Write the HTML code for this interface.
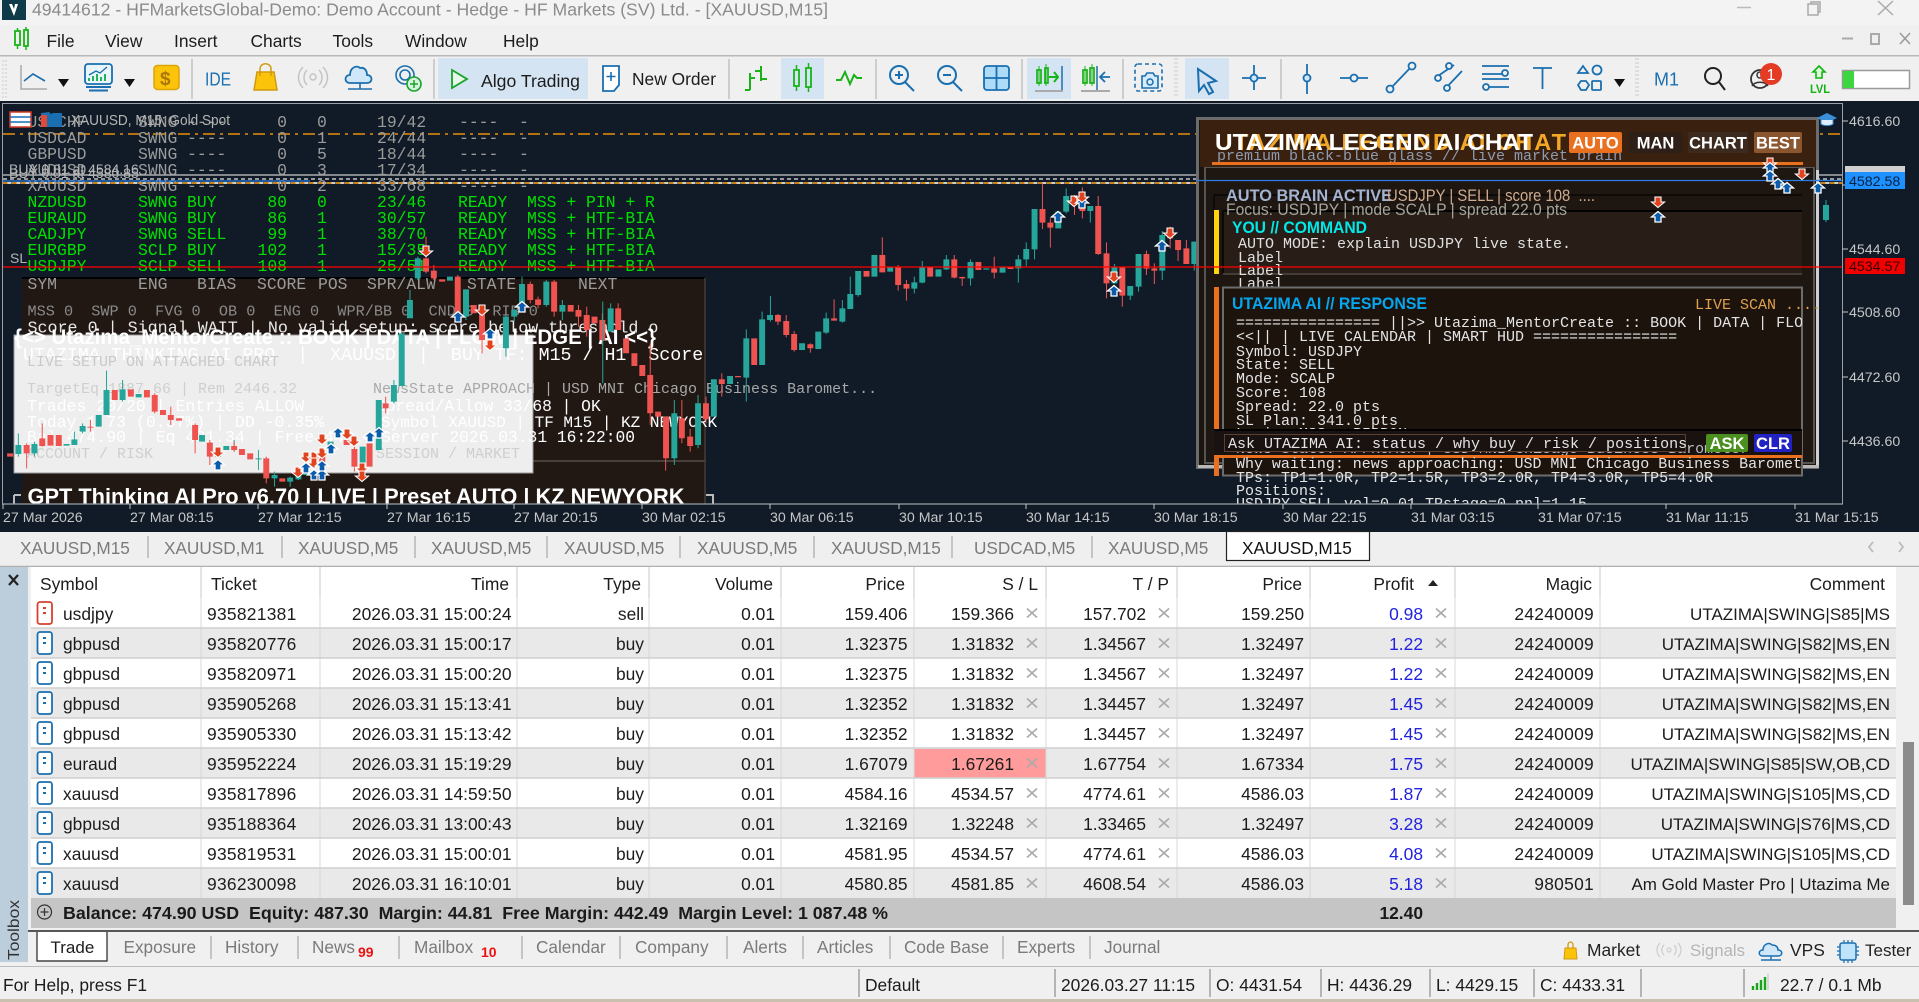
<!DOCTYPE html>
<html lang="en"><head><meta charset="utf-8"><title>XAUUSD,M15</title>
<style>
html,body{margin:0;padding:0;background:#f0f0f0;width:1919px;height:1002px;overflow:hidden}
svg{display:block}
text{font-family:"Liberation Sans",sans-serif;font-size:17.4px;fill:#1c1c1c;white-space:pre}
.m text,text.m{font-family:"Liberation Mono",monospace;font-size:15px}
.e{text-anchor:end}
.t text{font-size:17.2px;fill:#7a7a7a}
.b text{font-size:17.2px;fill:#7a7a7a}
.ax text{font-size:14.2px;fill:#c6c6c6}
.g16 text{font-family:"Liberation Mono",monospace;font-size:16.4px;fill:#9b9b9b}
.gr text{fill:#00e000}
.st text{font-size:17.4px;fill:#1c1c1c}
.ic{fill:none;stroke:#1a6fb0;stroke-width:2}
.gi{fill:none;stroke:#17b317;stroke-width:2}
.r text:nth-of-type(2),.r text:nth-of-type(11){letter-spacing:.28px}
.r text:nth-of-type(12){font-size:17px}
</style></head><body>
<svg xmlns="http://www.w3.org/2000/svg" width="1919" height="1002" viewBox="0 0 1919 1002">
<defs>
<clipPath id="ch"><rect x="3" y="104" width="1839" height="400"/></clipPath>
<clipPath id="box"><rect x="1222" y="287" width="580" height="188"/></clipPath>
<clipPath id="pn"><rect x="1200" y="100" width="620" height="404"/></clipPath>
<path id="x" d="M-5-4.500L5 4.500M-5 4.500L5-4.500" stroke="#aaa" stroke-width="1.600" fill="none"/>
<path id="u" d="M0-5.500L6.500 0H3V5H-3V0H-6.500Z" fill="#0b5cab" stroke="#fff" stroke-width="1.300"/>
<path id="d" d="M0 5.500L6.500 0H3V-5H-3V0H-6.500Z" fill="#e0431f" stroke="#fff" stroke-width="1.100"/>
<g id="buy"><rect x="37.500" y="-18" width="14.500" height="22" rx="2.500" fill="#fff" stroke="#1a6fb0" stroke-width="1.800"/><path d="M43 -12h3M43 -7h3" stroke="#1a6fb0" stroke-width="2"/></g>
</defs>

<!-- title bar -->
<rect width="1919" height="25" fill="#f3f3f3"/>
<rect x="2" y="0" width="24" height="20" fill="#0e3a4a"/>
<path d="M9 4l5 12 4-12h-3l-1 5-2-5z" fill="#fff"/>
<text x="32" y="15.500" textLength="796" lengthAdjust="spacingAndGlyphs" style="fill:#8b8b8b;font-size:17.500px">49414612 - HFMarketsGlobal-Demo: Demo Account - Hedge - HF Markets (SV) Ltd. - [XAUUSD,M15]</text>
<path d="M1737 7.500h14" stroke="#bbb" stroke-width="1.500"/>
<path d="M1808 4h10v11h-10zM1811 4v-2h9v10h-2" stroke="#aaa" stroke-width="1.500" fill="none"/>
<path d="M1878 1l15 14M1893 1l-15 14" stroke="#aaa" stroke-width="1.500"/>

<!-- menu -->
<rect y="25" width="1919" height="30" fill="#f0f0f0"/>
<rect y="55" width="1919" height="1.500" fill="#b8b8b8"/>
<path class="gi" d="M15 31v14h5v-14zM24 30v16h4v-16z" style="stroke-width:1.800"/><path d="M17.500 28v3M17.500 45v4M26 27v3M26 46v4" stroke="#17b317" stroke-width="1.500"/>
<g>
<text x="46.500" y="47">File</text><text x="105" y="47">View</text><text x="174" y="47">Insert</text><text x="250.500" y="47">Charts</text><text x="332.500" y="47">Tools</text><text x="405" y="47">Window</text><text x="503" y="47">Help</text>
</g>
<path d="M1842 38.500h11" stroke="#aaa" stroke-width="2"/><rect x="1871" y="34" width="8" height="10" fill="none" stroke="#aaa" stroke-width="2"/>
<path d="M1900 33l10 11M1910 33l-10 11" stroke="#999" stroke-width="1.500"/>

<!-- toolbar -->
<rect y="57" width="1919" height="44" fill="#f0f0f0"/>
<rect x="438" y="58" width="150" height="41" fill="#d5e4f2"/>
<rect x="781" y="58" width="43" height="41" fill="#d5e4f2"/>
<rect x="1027" y="58" width="44" height="41" fill="#d5e4f2"/>
<rect x="1185" y="58" width="44" height="41" fill="#d5e4f2"/>
<path d="M192 59v40M434 59v40M729 59v40M876 59v40M1022 59v40M1123 59v40M1281 59v40" stroke="#aaa" stroke-width="1"/>
<path d="M3 60v38M6 60v38M1177 58v40M1175 58v40M1638 58v40M1636 58v40" stroke="#ccc" stroke-width="1" stroke-dasharray="2 2"/>
<path d="M21 65V89H47" stroke="#a9a9a9" stroke-width="1.500" fill="none"/><path class="ic" d="M24 81l9-7 12 7" style="stroke-width:1.600"/>
<path d="M58 79h11l-5.500 8z" fill="#111"/>
<rect x="85" y="64" width="27" height="20" rx="3" fill="#eaf4fb" stroke="#1a6fb0" stroke-width="1.800"/><path d="M89 81v-3M93 81v-5M97 81v-7M101 81v-4M105 81v-7" stroke="#21b35a" stroke-width="2"/><path d="M89 75l7-4 4 2 7-6" stroke="#1a6fb0" stroke-width="1.300" fill="none"/><path d="M86 87h25M89 90.500h19" stroke="#1a6fb0" stroke-width="2"/>
<path d="M124 79h11l-5.500 8z" fill="#111"/>
<rect x="154" y="65.500" width="25" height="24" rx="3.500" fill="#fbc40a" stroke="#dca30a" stroke-width="1.500"/>
<text x="160" y="85" style="font-size:19px;font-weight:bold;fill:#a9770a">$</text>
<text x="205" y="85.500" textLength="26" lengthAdjust="spacingAndGlyphs" style="font-size:18px;fill:#1a6fb0">IDE</text>
<path d="M257 72h17l3 18h-23z" fill="#fbc40a" stroke="#d09a10" stroke-width="1.500"/><path d="M260 76v-7c0-7 11-7 11 0v7" fill="none" stroke="#d09a10" stroke-width="1.500"/>
<g fill="none" stroke="#c4c4c4" stroke-width="1.500"><circle cx="313" cy="77" r="3"/><path d="M307 70c-4 4-4 11 0 15M319 70c4 4 4 11 0 15M303 67c-6 6-6 15 0 21M323 67c6 6 6 15 0 21"/></g>
<path d="M350 83c-6 0-6-8 0-8 0-8 7-10 10-7 5-1 7 3 7 7 6 0 6 8 0 8z" fill="#cfe7f8" stroke="#1a6fb0" stroke-width="1.800"/><path d="M360 83v6M348 89h24" stroke="#1a6fb0" stroke-width="1.600"/>
<g fill="none" stroke="#1a6fb0" stroke-width="1.600"><circle cx="405" cy="75" r="9"/><circle cx="405" cy="75" r="5"/></g><circle cx="414" cy="84" r="7" fill="#d8f3dc" stroke="#17a32b" stroke-width="1.600"/><path d="M414 80v8M410 84h8" stroke="#17a32b" stroke-width="1.500"/>
<path d="M452 70l15 9-15 9z" fill="#e8f7e8" stroke="#17a32b" stroke-width="1.800"/>
<text x="481" y="87" textLength="99" lengthAdjust="spacingAndGlyphs">Algo Trading</text>
<path d="M603 66h16v19l-5 6h-11z" fill="#fff" stroke="#1a6fb0" stroke-width="1.800"/><path d="M611 72v9M606.500 76.500h9" stroke="#1a6fb0" stroke-width="1.600"/>
<text x="632" y="85" textLength="84" lengthAdjust="spacingAndGlyphs">New Order</text>
<path class="gi" d="M750 73v17M745 90h5M750 78h5M761 66v15M755 71h6M761 79h6"/>
<path class="gi" d="M794 70v16h5v-16zM806 68v19h5v-19z" style="stroke-width:1.800"/><path d="M796.500 65v5M796.500 86v5M808.500 63v5M808.500 87v5" stroke="#17b317" stroke-width="1.500"/>
<path class="gi" d="M836 80h5l4-8 5 12 4-9 3 3h5"/>
<g class="ic"><circle cx="899" cy="75" r="9"/><path d="M905 82l9 9M895 75h8M899 71v8"/><circle cx="947" cy="75" r="9"/><path d="M953 82l9 9M943 75h8"/></g>
<rect x="984" y="66" width="25" height="24" rx="3" fill="#aedcf8" stroke="#1a6fb0" stroke-width="1.800"/><path d="M984 78h25M996.500 66v24" stroke="#1a6fb0" stroke-width="1.800"/>
<path class="gi" d="M1037 70v13h4v-13zM1045 68v15h-1 4v-15z" style="stroke-width:1.700"/><path d="M1039 66v20M1046 64v22" stroke="#17b317" stroke-width="1"/><path class="gi" d="M1049 77h8M1054 72l4 5-4 5"/><path d="M1062 66v24" stroke="#1a6fb0" stroke-width="1.500"/><path d="M1035 91h28" stroke="#aaa" stroke-width="2"/>
<path class="gi" d="M1083 70v13h4v-13zM1090 68v15h4v-15z" style="stroke-width:1.700"/><path d="M1085 66v20M1092 64v22" stroke="#17b317" stroke-width="1"/><path d="M1097 66v24" stroke="#1a6fb0" stroke-width="1.500"/><path d="M1110 77h-9M1105 72l-5 5 5 5" fill="none" stroke="#1a6fb0" stroke-width="1.800"/><path d="M1081 91h29" stroke="#aaa" stroke-width="2"/>
<rect x="1135" y="64" width="27" height="27" rx="3" fill="none" stroke="#1a6fb0" stroke-width="1.600" stroke-dasharray="4 3"/><path d="M1142 76h3l2-3h6l2 3h3v12h-16z" fill="#d6ecfa" stroke="#1a6fb0" stroke-width="1.600"/><circle cx="1150" cy="82" r="3" fill="none" stroke="#1a6fb0" stroke-width="1.500"/>
<path d="M1198 69l18 12-8 2 5 9-4 2-5-9-5 6z" fill="#d5e4f2" stroke="#1a6fb0" stroke-width="2"/>
<g class="ic" style="stroke-width:1.800"><path d="M1254 65v25M1242 78h24"/><circle cx="1254" cy="78" r="3.500" fill="#cfe7f8"/>
<path d="M1307 64v30"/><circle cx="1307" cy="78" r="3.500" fill="#cfe7f8"/>
<path d="M1340 78h28"/><circle cx="1354" cy="78" r="3.500" fill="#f0f0f0"/>
<path d="M1390 89l22-23"/><circle cx="1390" cy="89" r="3.500" fill="#f0f0f0"/><circle cx="1412" cy="66" r="3.500" fill="#f0f0f0"/>
<path d="M1438 76l16-11M1445 89l17-18"/><circle cx="1438" cy="78" r="3" fill="#f0f0f0"/><circle cx="1449" cy="66" r="3" fill="#f0f0f0"/><circle cx="1447" cy="88" r="3" fill="#f0f0f0"/>
<path d="M1482 66h27M1482 74h22M1487 87h22M1482 79h27"/><circle cx="1505" cy="73" r="3" fill="#f0f0f0"/><circle cx="1486" cy="87" r="3" fill="#f0f0f0"/>
<path d="M1533 68h19M1542.500 68v21"/>
<path d="M1578 73l5-7 5 7z"/><circle cx="1597" cy="70" r="4.500"/><path d="M1578 85l3-4h5l3 4-3 5h-5z"/><rect x="1592" y="81" width="9" height="9" rx="1"/></g>
<path d="M1614 79h11l-5.500 8z" fill="#111"/>
<text x="1654" y="85.500" style="fill:#1a6fb0;font-size:18px">M1</text>
<circle cx="1713" cy="76" r="8" fill="none" stroke="#222" stroke-width="2"/><path d="M1719 82l6 8" stroke="#222" stroke-width="2"/>
<circle cx="1760" cy="79" r="9" fill="none" stroke="#333" stroke-width="1.800"/><path d="M1752 86c3-5 13-5 16 0M1757 75c0-4 6-4 6 0s-6 4-6 0" stroke="#333" stroke-width="1.500" fill="none"/>
<circle cx="1771" cy="74" r="11" fill="#e43b25"/><text x="1771" y="80" style="text-anchor:middle;fill:#fff;font-size:16px">1</text>
<path d="M1819 66l6 6h-3v6h-6v-6h-3z" fill="#dff7df" stroke="#11b511" stroke-width="1.600"/><text x="1810" y="93" textLength="20" lengthAdjust="spacingAndGlyphs" style="fill:#11b511;font-size:12px;font-weight:bold">LVL</text>
<rect x="1842.500" y="70.500" width="67" height="18" fill="#fff" stroke="#9a9a9a" stroke-width="1.500"/><rect x="1843" y="71" width="11" height="17" fill="#3ed63e"/>

<!-- chart -->
<rect y="101" width="1919" height="431" fill="#111b27"/>
<path d="M2.500 504V103.500H1842.500V504H2.500" fill="none" stroke="#9aa0a6" stroke-width="1"/>
<g clip-path="url(#ch)">
<rect x="22" y="278" width="683" height="226" fill="#211814"/>
<path d="M22 278h683" stroke="#000" stroke-width="2"/><path d="M705 278v226" stroke="#3a332e" stroke-width="2"/>
<path d="M533 461h172" stroke="#4a403a" stroke-width="2"/>
<rect x="14" y="335" width="519" height="138" fill="#eeeeee" stroke="#999" stroke-width="1"/>
<path d="M14 495v9M14 495h7M706 495h7v9" fill="none" stroke="#bbb" stroke-width="2"/>

<path d="M3 134H1842" stroke="#e8900c" stroke-width="1.500" stroke-dasharray="12 5 3 5"/>
<path d="M3 175H1842" stroke="#c9c9c9" stroke-width="1.200"/>
<path d="M3 179H1842" stroke="#e6e6e6" stroke-width="1.200" stroke-dasharray="4 3"/>
<path d="M3 183H1842" stroke="#e8900c" stroke-width="1.700" stroke-dasharray="5 4"/>
<path d="M7.500 183H1842" stroke="#e8e8e8" stroke-width="1.700" stroke-dasharray="4 5"/>

<g class="g16">
<text x="27.500" y="127">USDCHF</text><text x="138" y="127">SWNG</text><text x="187" y="127">----</text><text x="287" y="127" class="e">0</text><text x="317" y="127">0</text><text x="377" y="127">19/42</text><text x="459" y="127">----</text><text x="519" y="127">-</text>
<text x="27.500" y="143">USDCAD</text><text x="138" y="143">SWNG</text><text x="187" y="143">----</text><text x="287" y="143" class="e">0</text><text x="317" y="143">1</text><text x="377" y="143">24/44</text><text x="459" y="143">----</text><text x="519" y="143">-</text>
<text x="27.500" y="159">GBPUSD</text><text x="138" y="159">SWNG</text><text x="187" y="159">----</text><text x="287" y="159" class="e">0</text><text x="317" y="159">5</text><text x="377" y="159">18/44</text><text x="459" y="159">----</text><text x="519" y="159">-</text>
<text x="27.500" y="175">AUDUSD</text><text x="138" y="175">SWNG</text><text x="187" y="175">----</text><text x="287" y="175" class="e">0</text><text x="317" y="175">3</text><text x="377" y="175">17/34</text><text x="459" y="175">----</text><text x="519" y="175">-</text>
<text x="27.500" y="191">XAUUSD</text><text x="138" y="191">SWNG</text><text x="187" y="191">----</text><text x="287" y="191" class="e">0</text><text x="317" y="191">2</text><text x="377" y="191">33/68</text><text x="459" y="191">----</text><text x="519" y="191">-</text>
<g class="gr">
<text x="27.500" y="207">NZDUSD</text><text x="138" y="207">SWNG</text><text x="187" y="207">BUY</text><text x="287" y="207" class="e">80</text><text x="317" y="207">0</text><text x="377" y="207">23/46</text><text x="458" y="207">READY</text><text x="527" y="207">MSS + PIN + R</text>
<text x="27.500" y="223">EURAUD</text><text x="138" y="223">SWNG</text><text x="187" y="223">BUY</text><text x="287" y="223" class="e">86</text><text x="317" y="223">1</text><text x="377" y="223">30/57</text><text x="458" y="223">READY</text><text x="527" y="223">MSS + HTF-BIA</text>
<text x="27.500" y="239">CADJPY</text><text x="138" y="239">SWNG</text><text x="187" y="239">SELL</text><text x="287" y="239" class="e">99</text><text x="317" y="239">1</text><text x="377" y="239">38/70</text><text x="458" y="239">READY</text><text x="527" y="239">MSS + HTF-BIA</text>
<text x="27.500" y="255">EURGBP</text><text x="138" y="255">SCLP</text><text x="187" y="255">BUY</text><text x="287" y="255" class="e">102</text><text x="317" y="255">1</text><text x="377" y="255">15/35</text><text x="458" y="255">READY</text><text x="527" y="255">MSS + HTF-BIA</text>
<text x="27.500" y="271">USDJPY</text><text x="138" y="271">SCLP</text><text x="187" y="271">SELL</text><text x="287" y="271" class="e">108</text><text x="317" y="271">1</text><text x="377" y="271">25/51</text><text x="458" y="271">READY</text><text x="527" y="271">MSS + HTF-BIA</text>
</g>
<text x="27.500" y="289">SYM</text><text x="138" y="289">ENG</text><text x="197" y="289">BIAS</text><text x="257" y="289">SCORE</text><text x="318" y="289">POS</text><text x="367" y="289">SPR/ALW</text><text x="467" y="289">STATE</text><text x="578" y="289">NEXT</text>
</g>

<text x="71" y="125" textLength="159" lengthAdjust="spacingAndGlyphs" style="fill:#b5b5b5;font-size:15px">XAUUSD, M15: Gold Spot</text>
<rect x="10" y="112" width="21" height="15" fill="#fff" stroke="#d63a2a" stroke-width="1.500"/><path d="M10 117h21M10 122h21" stroke="#1a6fb0" stroke-width="1.500"/>
<path d="M41 113l8-1 2 2 2-1h9v14H41z" fill="#1a6fb0"/><rect x="41" y="115" width="6" height="12" fill="#e14a3a"/>
<text x="9" y="174" style="fill:#b5b5b5;font-size:14px">BUY 0.01 at 4584.16</text>
<text x="9" y="178" style="fill:#b5b5b5;font-size:14px">BUY 0.01 at 4580.85</text>
<text x="10" y="263" style="fill:#b5b5b5;font-size:14px">SL</text>

<g class="m">
<text x="27.500" y="315.500" style="fill:#8a8a8a;font-size:15.200px">MSS 0  SWP 0  FVG 0  OB 0  ENG 0  WPR/BB 0  CND 0  RIB 0</text>
<text x="27.500" y="332.500" style="fill:#e8e8e8;font-size:16.700px">Score 0 | Signal WAIT | No valid setup: score below threshold o</text>
<text x="23" y="360" style="fill:#fff;font-size:18.300px">UTAZIMA THINKING AI PRO  |  XAUUSD  |  BUY TF: M15 / H1  Score</text>
<text x="27" y="366" style="fill:#c9c9c9">LIVE SETUP ON ATTACHED CHART</text>
<text x="27" y="393" style="fill:#cfcfcf">TargetEq 1887.66 | Rem 2446.32</text>
<text x="373" y="393" style="fill:#a8a8a8">NewsState APPROACH | USD MNI Chicago Business Baromet...</text>
<text x="27" y="411" style="fill:#fff;font-size:16.500px">Trades 20/20 | Entries ALLOW</text>
<text x="376" y="411" style="fill:#fff;font-size:16.300px">Spread/Allow 33/68 | OK</text>
<text x="27" y="427" style="fill:#fff;font-size:16.500px">Today 1.73 (0.37%) | DD -0.35%</text>
<text x="381" y="427" style="fill:#fff;font-size:16px">Symbol XAUUSD | TF M15 | KZ NEWYORK</text>
<text x="27" y="442" style="fill:#fff;font-size:16.500px">Bal 474.90 | Eq 481.34 | Free 442.49</text>
<text x="381" y="442" style="fill:#fff;font-size:16.300px">Server 2026.03.31 16:22:00</text>
<text x="27" y="458" style="fill:#cfcfcf">ACCOUNT / RISK</text>
<text x="376" y="458" style="fill:#cfcfcf">SESSION / MARKET</text>
</g>
<text x="14" y="344" textLength="642" lengthAdjust="spacingAndGlyphs" style="fill:#fff;font-weight:bold;font-size:21px">{&lt;&gt; Utazima_MentorCreate :: BOOK | DATA | FLOW | EDGE | AI &lt;&lt;}</text>
<text x="27.500" y="504" textLength="657" lengthAdjust="spacingAndGlyphs" style="fill:#fff;font-weight:bold;font-size:22px">GPT Thinking AI Pro v6.70 | LIVE | Preset AUTO | KZ NEWYORK</text>

<!-- candles: left section -->
<g transform="translate(0,300) scale(.4591,.3333)">
<path fill="none" stroke="#26a69a" stroke-width="2.200" d="M40 400V470M232 212V345M267 240V305M598 515V560M632 530V560M858 240V310M75 425V470M162 395V435M180 370V400M510 420V455M563 450V510M650 520V540"/>
<path fill="none" stroke="#ef5350" stroke-width="2.200" d="M58 430V505M92 370V440M197 360V395M425 370V460M337 280V340M457 420V495M580 470V550M772 440V515M840 290V340M372 320V375M510 425V455"/>
<path fill="none" stroke="#26a69a" stroke-width="13" d="M40 435V462M75 432V460M145 432V437M162 418V435M180 378V395M215 345V380M232 270V345M267 268V300M302 282V292M440 405V425M475 450V470M493 438V450M563 475V478M598 525V535M632 533V545M650 525V538M667 505V525M720 425V445M790 440V490M825 300V450M858 255V305M875 100V258"/>
<path fill="none" stroke="#ef5350" stroke-width="13" d="M22 460V470M58 435V460M92 415V438M110 405V437M128 405V438M197 380V383M250 270V300M285 268V290M320 270V292M337 285V335M355 330V345M372 345V360M390 355V362M425 375V420M457 428V470M510 438V450M527 447V465M545 460V478M580 475V535M615 535V545M685 475V500M702 445V490M755 420V435M772 447V500M805 430V500M840 310V325"/>
</g>
<g transform="translate(0,100) scale(.4591,.3333)">
<path fill="none" stroke="#26a69a" stroke-width="2.200" d="M910 470V540M1137 530V620M1015 568V660M893 570V650M1190 540V620M1225 600V660M1120 625V665M1102 645V770"/>
<path fill="none" stroke="#ef5350" stroke-width="2.200" d="M928 410V520M945 495V540M1155 545V610M1207 540V650M997 525V650M1172 590V625M1050 625V760M1260 615V680M1278 620V710M1312 640V735"/>
<path fill="none" stroke="#26a69a" stroke-width="13" d="M910 475V535M980 530V542M1015 568V650M1102 650V745M1120 630V650M1137 552V610M1190 545V615M1225 615V635M893 600V655"/>
<path fill="none" stroke="#ef5350" stroke-width="13" d="M928 475V515M945 512V535M963 538V545M997 530V640M1032 615V640M1050 640V720M1068 700V740M1155 552V600M1172 598V615M1207 545V635M1243 615V635M1260 630V650M1278 645V690M1295 650V670M1312 660V720"/>
</g>
<g transform="translate(600,130) scale(.3954,.3333)">
<path fill="none" stroke="#26a69a" stroke-width="2.500" d="M7 515V760M27 520V605M431 498V575M410 545V570M370 598V815M1179 175V250M1240 228V278M633 440V495M653 423V500M613 510V578M572 548V612M1058 375V458M1078 337V408M1099 237V388M937 388V467M815 393V460M795 440V490M876 375V420M1422 303V450M1341 468V510M1362 372V485M1503 335V422M1301 402V460M1159 245V295M188 810V1005M248 795V955"/>
<path fill="none" stroke="#ef5350" stroke-width="2.500" d="M1119 160V297M1139 265V353M714 322V427M754 405V482M775 450V512M896 375V445M916 440V468M997 380V445M1200 195V255M1220 172V265M1260 198V375M1281 337V505M1321 410V530M1382 362V435M1402 400V462M1442 290V355M1462 330V393M1483 330V402M592 508V572M450 552V585M471 555V622M491 603V665M532 640V668M166 860V1022M207 810V940M228 897V965M127 640V885M268 800V880M308 730V800M46 520V600"/>
<path fill="none" stroke="#26a69a" stroke-width="15" d="M27 535V605M188 850V985M248 820V945M288 748V860M329 738V762M370 625V743M410 568V705M430 555V570M511 640V660M552 605V657M572 565V608M613 535V575M633 492V537M653 423V495M694 375V440M734 410V425M795 457V476M815 410V458M856 418V440M876 388V418M937 396V445M977 415V419M1018 411V428M1058 388V415M1078 357V388M1099 237V358M1159 245V295M1179 198V245M1240 228V243M1301 410V460M1341 468V497M1362 372V470M1422 315V422M1503 335V402"/>
<path fill="none" stroke="#ef5350" stroke-width="15" d="M46 535V600M66 625V670M87 670V708M107 705V738M127 735V850M147 845V860M167 860V985M207 865V925M228 920V948M268 820V868M308 748V762M349 738V742M390 625V705M450 555V575M471 573V615M491 612V660M532 643V655M592 565V572M674 423V440M714 375V427M754 410V465M775 462V476M835 410V440M896 388V443M916 441V445M957 396V420M997 415V428M1038 411V417M1119 237V278M1139 278V293M1200 200V225M1220 215V243M1260 228V372M1281 370V460M1321 410V497M1382 372V416M1402 415V422M1442 305V325M1462 330V360M1483 355V402"/>
</g>
</g>

<!-- right panel -->
<rect x="1197.500" y="118.500" width="620" height="349" fill="#1c140e" stroke="#6c6c6c" stroke-width="3"/>
<rect x="1205" y="167" width="609" height="296" fill="#1e1610" stroke="#555" stroke-width="2"/>
<rect x="1200" y="120" width="616" height="47" fill="#39200f"/>
<rect x="1816" y="170" width="3" height="297" fill="#cfcfcf"/>
<rect x="1198" y="465" width="621" height="3" fill="#b8b8b8"/>
<path d="M1214 195v80M1214 195h588" stroke="#000" stroke-width="1.500" fill="none" opacity=".7"/>
<text x="1215" y="150" textLength="351" lengthAdjust="spacing" style="fill:#f2a727;font-weight:bold;font-size:23.500px">UTAZIMA LEGEND AI CHAT</text>
<text x="1215" y="150" textLength="318" lengthAdjust="spacingAndGlyphs" style="fill:#fff;font-weight:bold;font-size:23.500px">UTAZIMA LEGEND AI CHAT</text>
<text x="1217" y="160" class="m" style="fill:#8e9bb0">premium black-blue glass // live market brain</text>
<rect x="1212" y="162" width="591" height="3" fill="#e8701f"/>
<rect x="1569" y="132" width="53" height="21" rx="2" fill="#e8701f"/><text x="1595.500" y="148.500" style="fill:#fff;font-weight:bold;text-anchor:middle;font-size:16.500px">AUTO</text>
<rect x="1629" y="132" width="53" height="21" rx="2" fill="#2e2018"/><text x="1655.500" y="148.500" style="fill:#fff;font-weight:bold;text-anchor:middle;font-size:16.500px">MAN</text>
<rect x="1688" y="132" width="60" height="21" rx="2" fill="#3c2a1e"/><text x="1718" y="148.500" style="fill:#fff;font-weight:bold;text-anchor:middle;font-size:16.500px">CHART</text>
<rect x="1754" y="132" width="48" height="21" rx="2" fill="#8a5630"/><text x="1778" y="148.500" style="fill:#fff;font-weight:bold;text-anchor:middle;font-size:16.500px">BEST</text>

<text x="1226" y="201" textLength="166" lengthAdjust="spacingAndGlyphs" style="fill:#a3b4d2;font-weight:bold;font-size:17px">AUTO BRAIN ACTIVE</text>
<text x="1387" y="201" textLength="208" lengthAdjust="spacingAndGlyphs" style="fill:#d0ac90;font-size:17px">USDJPY | SELL | score 108  ....</text>
<rect x="1223" y="211" width="579" height="63" fill="#281e17"/>
<path d="M1223 211h579" stroke="#000" stroke-width="2"/>
<path d="M1223 211v63" stroke="#0d0906" stroke-width="2"/>
<path d="M1223 274h579" stroke="#453c35" stroke-width="2"/>
<text x="1226" y="215" textLength="341" lengthAdjust="spacingAndGlyphs" style="fill:#a5a59c;font-size:17px">Focus: USDJPY | mode SCALP | spread 22.0 pts</text>
<rect x="1214" y="210" width="5" height="64" fill="#ffd40a"/>
<rect x="1214" y="287" width="5" height="189" fill="#e8701f"/>
<text x="1232" y="233" textLength="135" lengthAdjust="spacingAndGlyphs" style="fill:#00e8e8;font-weight:bold;font-size:17px">YOU // COMMAND</text>
<g class="m">
<text x="1238" y="248" style="fill:#e0e0e0">AUTO MODE: explain USDJPY live state.</text>
<text x="1238" y="262" style="fill:#e0e0e0">Label</text>
<text x="1238" y="275" style="fill:#e0e0e0">Label</text>
<text x="1238" y="288" style="fill:#e0e0e0">Label</text>
</g>
<rect x="1223" y="287.500" width="579" height="188" fill="#1c130d" stroke="#6c6c6c" stroke-width="2"/>
<text x="1232" y="309" textLength="195" lengthAdjust="spacingAndGlyphs" style="fill:#06a6ee;font-weight:bold;font-size:17px">UTAZIMA AI // RESPONSE</text>
<text x="1695" y="309" class="m" style="fill:#e0a050">LIVE SCAN ....</text>
<g class="m">
<g clip-path="url(#box)">
<text x="1236" y="327" style="fill:#e4e4e4">================ ||&gt;&gt; Utazima_MentorCreate :: BOOK | DATA | FLO</text>
<text x="1236" y="341" style="fill:#e4e4e4">&lt;&lt;|| | LIVE CALENDAR | SMART HUD ================</text>
<text x="1236" y="356" style="fill:#e4e4e4">Symbol: USDJPY</text>
<text x="1236" y="369" style="fill:#e4e4e4">State: SELL</text>
<text x="1236" y="383" style="fill:#e4e4e4">Mode: SCALP</text>
<text x="1236" y="397" style="fill:#e4e4e4">Score: 108</text>
<text x="1236" y="411" style="fill:#e4e4e4">Spread: 22.0 pts</text>
<text x="1236" y="425" style="fill:#e4e4e4">SL Plan: 341.0 pts</text>
<text x="1236" y="438" style="fill:#e4e4e4">Logic: MSS + RIBBON</text>
</g>
</g>
<rect x="1214" y="429" width="588" height="27" fill="#1a1210"/>
<path d="M1214 430h588" stroke="#000" stroke-width="2"/>
<text x="1236" y="453" class="m" style="fill:#bdbdbd">News State: APPROACH | USD MNI Chicago Business Barometer</text>
<rect x="1224.500" y="434.500" width="461" height="17" fill="#1a1210" stroke="#5a4030" stroke-width="1"/>
<text x="1228" y="448" class="m" style="fill:#e4e4e4">Ask UTAZIMA AI: status / why buy / risk / positions</text>
<rect x="1706" y="434" width="42" height="18" rx="2" fill="#4a8f20"/><text x="1727" y="449" style="fill:#fff;font-weight:bold;text-anchor:middle;font-size:16.500px">ASK</text>
<rect x="1754" y="434" width="38" height="18" rx="2" fill="#2222c4"/><text x="1773" y="449" style="fill:#fff;font-weight:bold;text-anchor:middle;font-size:16.500px">CLR</text>
<rect x="1214" y="455" width="588" height="3" fill="#e8701f"/>
<g class="m" clip-path="url(#pn)">
<text x="1236" y="468" textLength="566" style="fill:#e4e4e4">Why waiting: news approaching: USD MNI Chicago Business Baromet</text>
<text x="1236" y="482" style="fill:#e4e4e4">TPs: TP1=1.0R, TP2=1.5R, TP3=2.0R, TP4=3.0R, TP5=4.0R</text>
<text x="1236" y="495" style="fill:#e4e4e4">Positions:</text>
<text x="1236" y="508" style="fill:#e4e4e4">USDJPY SELL vol=0.01 TPstage=0 pnl=1.15</text>
</g>
<rect x="3" y="504" width="1839" height="7" fill="#111b27"/>
<path d="M2 504H1843" stroke="#9aa0a6" stroke-width="1.200"/>

<!-- horizontal overlays -->
<path d="M3 267H1842" stroke="#f00" stroke-width="1.200"/>
<path d="M3 181H310M1196 180.500H1842" stroke="#2a7de1" stroke-width="1.300"/>

<!-- right side candle -->
<path d="M1826 200V222" stroke="#26a69a" stroke-width="1"/><rect x="1823" y="205" width="6" height="15" fill="#26a69a"/>
<path d="M1817 118l10-5 10 5-10 5z" fill="#3a8fd8"/><path d="M1821 120v4c3 2 9 2 12 0v-4" fill="#dfeefb" stroke="#3a8fd8"/>

<!-- arrows -->
<use href="#d" x="218" y="452"/><use href="#u" x="218" y="465"/>
<use href="#d" x="298" y="472"/><use href="#u" x="306" y="468"/><use href="#d" x="306" y="457"/><use href="#d" x="314" y="457"/><use href="#d" x="314" y="463"/><use href="#u" x="314" y="475"/><use href="#u" x="322" y="475"/><use href="#u" x="322" y="466"/><use href="#d" x="322" y="453"/><use href="#d" x="322" y="439"/><use href="#u" x="331" y="449"/><use href="#u" x="338" y="433"/><use href="#d" x="347" y="434"/><use href="#d" x="354" y="441"/><use href="#u" x="370" y="437"/><use href="#u" x="379" y="433"/><use href="#d" x="362" y="468"/><use href="#d" x="362" y="476"/>
<use href="#d" x="426" y="251"/><use href="#u" x="458" y="317"/><use href="#d" x="482" y="310"/><use href="#u" x="522" y="307"/><use href="#u" x="490" y="334"/><use href="#d" x="490" y="345"/>
<use href="#u" x="1058" y="217"/><use href="#d" x="1074" y="201"/><use href="#u" x="1082" y="203"/><use href="#d" x="1082" y="197"/><use href="#u" x="1162" y="246"/><use href="#d" x="1170" y="233"/><use href="#d" x="1114" y="277"/><use href="#u" x="1114" y="291"/>
<use href="#d" x="1658" y="202"/><use href="#u" x="1658" y="217"/><use href="#d" x="1770" y="163"/><use href="#u" x="1770" y="168"/><use href="#u" x="1770" y="176"/><use href="#u" x="1778" y="184"/><use href="#u" x="1787" y="188"/><use href="#u" x="1818" y="188"/><use href="#d" x="1802" y="174"/>

<!-- price axis -->
<path d="M1842 121h6M1842 185h6M1842 249h6M1842 312h6M1842 377h6M1842 441h6" stroke="#c6c6c6"/>
<g class="ax">
<text x="1849" y="126">4616.60</text><text x="1849" y="254">4544.60</text><text x="1849" y="317">4508.60</text><text x="1849" y="382">4472.60</text><text x="1849" y="446">4436.60</text>
</g>
<rect x="1845" y="166" width="60" height="8" fill="#d0d0d0"/>
<rect x="1845" y="172" width="60" height="17" fill="#1e90ff"/><text x="1849" y="186" style="font-size:14.200px;fill:#08233f">4582.58</text>
<rect x="1845" y="258" width="60" height="16" fill="#f20000"/><text x="1849" y="271" style="font-size:14.200px;fill:#3a0000">4534.57</text>

<!-- time axis -->
<path d="M3 504v5M130 504v5M258 504v5M387 504v5M514 504v5M642 504v5M770 504v5M899 504v5M1026 504v5M1154 504v5M1283 504v5M1411 504v5M1538 504v5M1666 504v5M1795 504v5" stroke="#c6c6c6"/>
<g class="ax">
<text x="3" y="522">27 Mar 2026</text><text x="130" y="522">27 Mar 08:15</text><text x="258" y="522">27 Mar 12:15</text><text x="387" y="522">27 Mar 16:15</text><text x="514" y="522">27 Mar 20:15</text><text x="642" y="522">30 Mar 02:15</text><text x="770" y="522">30 Mar 06:15</text><text x="899" y="522">30 Mar 10:15</text><text x="1026" y="522">30 Mar 14:15</text><text x="1154" y="522">30 Mar 18:15</text><text x="1283" y="522">30 Mar 22:15</text><text x="1411" y="522">31 Mar 03:15</text><text x="1538" y="522">31 Mar 07:15</text><text x="1666" y="522">31 Mar 11:15</text><text x="1795" y="522">31 Mar 15:15</text>
</g>

<!-- tabs -->
<rect y="532" width="1919" height="34" fill="#efefef"/>
<path d="M0 566.500H1919" stroke="#b0b0b0" stroke-width="1.500"/>
<path d="M148 536v22M282 536v22M415 536v22M547 536v22M680 536v22M814 536v22M952 536v22M1092 536v22" stroke="#999"/>
<g class="t">
<text x="20" y="554">XAUUSD,M15</text><text x="164" y="554">XAUUSD,M1</text><text x="298" y="554">XAUUSD,M5</text><text x="431" y="554">XAUUSD,M5</text><text x="564" y="554">XAUUSD,M5</text><text x="697" y="554">XAUUSD,M5</text><text x="831" y="554">XAUUSD,M15</text><text x="974" y="554">USDCAD,M5</text><text x="1108" y="554">XAUUSD,M5</text>
</g>
<rect x="1226.500" y="531.500" width="143" height="29" fill="#fff" stroke="#222" stroke-width="1.200"/>
<text x="1242" y="554" style="font-size:17.200px;fill:#111">XAUUSD,M15</text>
<path d="M1873 542l-4 5 4 5M1899 542l4 5-4 5" fill="none" stroke="#bbb" stroke-width="1.800"/>

<!-- toolbox strip -->
<rect y="567" width="28" height="395" fill="#bccddc"/>
<path d="M9 575l9 10M18 575l-9 10" stroke="#222" stroke-width="2.200"/>
<text transform="translate(19,960) rotate(-90)" textLength="60" lengthAdjust="spacingAndGlyphs" style="font-size:16px;fill:#333">Toolbox</text>

<!-- table -->
<rect x="28" y="567" width="1891" height="364" fill="#f0f0f0"/>
<rect x="31" y="567" width="1865" height="31" fill="#fff"/>
<rect x="31" y="598" width="1865" height="30" fill="#fff"/><rect x="31" y="628" width="1865" height="30" fill="#e9e9e9"/><rect x="31" y="658" width="1865" height="30" fill="#fff"/><rect x="31" y="688" width="1865" height="30" fill="#e9e9e9"/><rect x="31" y="718" width="1865" height="30" fill="#fff"/><rect x="31" y="748" width="1865" height="30" fill="#e9e9e9"/><rect x="31" y="778" width="1865" height="30" fill="#fff"/><rect x="31" y="808" width="1865" height="30" fill="#e9e9e9"/><rect x="31" y="838" width="1865" height="30" fill="#fff"/><rect x="31" y="868" width="1865" height="30" fill="#e9e9e9"/>
<rect x="914" y="749" width="132" height="29" fill="#ff9b9b"/>
<path d="M201 598V898M320 598V898M517 598V898M649 598V898M781 598V898M914 598V898M1046 598V898M1177 598V898M1310 598V898M1455 598V898M1600 598V898" stroke="#d8d8d8"/>
<path d="M201 567V598M320 567V598M517 567V598M649 567V598M781 567V598M914 567V598M1046 567V598M1177 567V598M1310 567V598M1455 567V598M1600 567V598" stroke="#c8c8c8"/>
<path d="M31 628H1896M31 658H1896M31 688H1896M31 718H1896M31 748H1896M31 778H1896M31 808H1896M31 838H1896M31 868H1896" stroke="#cfcfcf" stroke-width="1.500"/>
<rect x="1903" y="742" width="11" height="163" fill="#8c8c8c"/>

<g>
<text x="40" y="590">Symbol</text><text x="211" y="590">Ticket</text><text x="509" y="590" class="e">Time</text><text x="641" y="590" class="e">Type</text><text x="773" y="590" class="e">Volume</text><text x="905" y="590" class="e">Price</text><text x="1038" y="590" class="e">S / L</text><text x="1169" y="590" class="e">T / P</text><text x="1302" y="590" class="e">Price</text><text x="1414" y="590" class="e">Profit</text><text x="1592" y="590" class="e">Magic</text><text x="1885" y="590" class="e">Comment</text>
<path d="M1428 586l5-6 5 6z" fill="#222"/>
</g>

<g class="r" transform="translate(0,620)">
<rect x="37.500" y="-18" width="14.500" height="22" rx="2.500" fill="#fff" stroke="#d8402f" stroke-width="1.800"/><path d="M43-12h3M43-7h3" stroke="#d8402f" stroke-width="2"/>
<text x="63" y="0">usdjpy</text><text x="207" y="0">935821381</text><text x="511.500" y="0" class="e">2026.03.31 15:00:24</text><text x="644" y="0" class="e">sell</text><text x="775" y="0" class="e">0.01</text><text x="907.500" y="0" class="e">159.406</text><text x="1014" y="0" class="e">159.366</text><use href="#x" x="1032" y="-7"/><text x="1146" y="0" class="e">157.702</text><use href="#x" x="1164" y="-7"/><text x="1304" y="0" class="e">159.250</text><text x="1423" y="0" class="e" style="fill:#2222e0">0.98</text><use href="#x" x="1441" y="-7"/><text x="1594" y="0" class="e">24240009</text><text x="1890" y="0" class="e">UTAZIMA|SWING|S85|MS</text>
</g>
<g class="r" transform="translate(0,650)"><use href="#buy"/>
<text x="63" y="0">gbpusd</text><text x="207" y="0">935820776</text><text x="511.500" y="0" class="e">2026.03.31 15:00:17</text><text x="644" y="0" class="e">buy</text><text x="775" y="0" class="e">0.01</text><text x="907.500" y="0" class="e">1.32375</text><text x="1014" y="0" class="e">1.31832</text><use href="#x" x="1032" y="-7"/><text x="1146" y="0" class="e">1.34567</text><use href="#x" x="1164" y="-7"/><text x="1304" y="0" class="e">1.32497</text><text x="1423" y="0" class="e" style="fill:#2222e0">1.22</text><use href="#x" x="1441" y="-7"/><text x="1594" y="0" class="e">24240009</text><text x="1890" y="0" class="e">UTAZIMA|SWING|S82|MS,EN</text>
</g>
<g class="r" transform="translate(0,680)"><use href="#buy"/>
<text x="63" y="0">gbpusd</text><text x="207" y="0">935820971</text><text x="511.500" y="0" class="e">2026.03.31 15:00:20</text><text x="644" y="0" class="e">buy</text><text x="775" y="0" class="e">0.01</text><text x="907.500" y="0" class="e">1.32375</text><text x="1014" y="0" class="e">1.31832</text><use href="#x" x="1032" y="-7"/><text x="1146" y="0" class="e">1.34567</text><use href="#x" x="1164" y="-7"/><text x="1304" y="0" class="e">1.32497</text><text x="1423" y="0" class="e" style="fill:#2222e0">1.22</text><use href="#x" x="1441" y="-7"/><text x="1594" y="0" class="e">24240009</text><text x="1890" y="0" class="e">UTAZIMA|SWING|S82|MS,EN</text>
</g>
<g class="r" transform="translate(0,710)"><use href="#buy"/>
<text x="63" y="0">gbpusd</text><text x="207" y="0">935905268</text><text x="511.500" y="0" class="e">2026.03.31 15:13:41</text><text x="644" y="0" class="e">buy</text><text x="775" y="0" class="e">0.01</text><text x="907.500" y="0" class="e">1.32352</text><text x="1014" y="0" class="e">1.31832</text><use href="#x" x="1032" y="-7"/><text x="1146" y="0" class="e">1.34457</text><use href="#x" x="1164" y="-7"/><text x="1304" y="0" class="e">1.32497</text><text x="1423" y="0" class="e" style="fill:#2222e0">1.45</text><use href="#x" x="1441" y="-7"/><text x="1594" y="0" class="e">24240009</text><text x="1890" y="0" class="e">UTAZIMA|SWING|S82|MS,EN</text>
</g>
<g class="r" transform="translate(0,740)"><use href="#buy"/>
<text x="63" y="0">gbpusd</text><text x="207" y="0">935905330</text><text x="511.500" y="0" class="e">2026.03.31 15:13:42</text><text x="644" y="0" class="e">buy</text><text x="775" y="0" class="e">0.01</text><text x="907.500" y="0" class="e">1.32352</text><text x="1014" y="0" class="e">1.31832</text><use href="#x" x="1032" y="-7"/><text x="1146" y="0" class="e">1.34457</text><use href="#x" x="1164" y="-7"/><text x="1304" y="0" class="e">1.32497</text><text x="1423" y="0" class="e" style="fill:#2222e0">1.45</text><use href="#x" x="1441" y="-7"/><text x="1594" y="0" class="e">24240009</text><text x="1890" y="0" class="e">UTAZIMA|SWING|S82|MS,EN</text>
</g>
<g class="r" transform="translate(0,770)"><use href="#buy"/>
<text x="63" y="0">euraud</text><text x="207" y="0">935952224</text><text x="511.500" y="0" class="e">2026.03.31 15:19:29</text><text x="644" y="0" class="e">buy</text><text x="775" y="0" class="e">0.01</text><text x="907.500" y="0" class="e">1.67079</text><text x="1014" y="0" class="e">1.67261</text><use href="#x" x="1032" y="-7"/><text x="1146" y="0" class="e">1.67754</text><use href="#x" x="1164" y="-7"/><text x="1304" y="0" class="e">1.67334</text><text x="1423" y="0" class="e" style="fill:#2222e0">1.75</text><use href="#x" x="1441" y="-7"/><text x="1594" y="0" class="e">24240009</text><text x="1890" y="0" class="e">UTAZIMA|SWING|S85|SW,OB,CD</text>
</g>
<g class="r" transform="translate(0,800)"><use href="#buy"/>
<text x="63" y="0">xauusd</text><text x="207" y="0">935817896</text><text x="511.500" y="0" class="e">2026.03.31 14:59:50</text><text x="644" y="0" class="e">buy</text><text x="775" y="0" class="e">0.01</text><text x="907.500" y="0" class="e">4584.16</text><text x="1014" y="0" class="e">4534.57</text><use href="#x" x="1032" y="-7"/><text x="1146" y="0" class="e">4774.61</text><use href="#x" x="1164" y="-7"/><text x="1304" y="0" class="e">4586.03</text><text x="1423" y="0" class="e" style="fill:#2222e0">1.87</text><use href="#x" x="1441" y="-7"/><text x="1594" y="0" class="e">24240009</text><text x="1890" y="0" class="e">UTAZIMA|SWING|S105|MS,CD</text>
</g>
<g class="r" transform="translate(0,830)"><use href="#buy"/>
<text x="63" y="0">gbpusd</text><text x="207" y="0">935188364</text><text x="511.500" y="0" class="e">2026.03.31 13:00:43</text><text x="644" y="0" class="e">buy</text><text x="775" y="0" class="e">0.01</text><text x="907.500" y="0" class="e">1.32169</text><text x="1014" y="0" class="e">1.32248</text><use href="#x" x="1032" y="-7"/><text x="1146" y="0" class="e">1.33465</text><use href="#x" x="1164" y="-7"/><text x="1304" y="0" class="e">1.32497</text><text x="1423" y="0" class="e" style="fill:#2222e0">3.28</text><use href="#x" x="1441" y="-7"/><text x="1594" y="0" class="e">24240009</text><text x="1890" y="0" class="e">UTAZIMA|SWING|S76|MS,CD</text>
</g>
<g class="r" transform="translate(0,860)"><use href="#buy"/>
<text x="63" y="0">xauusd</text><text x="207" y="0">935819531</text><text x="511.500" y="0" class="e">2026.03.31 15:00:01</text><text x="644" y="0" class="e">buy</text><text x="775" y="0" class="e">0.01</text><text x="907.500" y="0" class="e">4581.95</text><text x="1014" y="0" class="e">4534.57</text><use href="#x" x="1032" y="-7"/><text x="1146" y="0" class="e">4774.61</text><use href="#x" x="1164" y="-7"/><text x="1304" y="0" class="e">4586.03</text><text x="1423" y="0" class="e" style="fill:#2222e0">4.08</text><use href="#x" x="1441" y="-7"/><text x="1594" y="0" class="e">24240009</text><text x="1890" y="0" class="e">UTAZIMA|SWING|S105|MS,CD</text>
</g>
<g class="r" transform="translate(0,890)"><use href="#buy"/>
<text x="63" y="0">xauusd</text><text x="207" y="0">936230098</text><text x="511.500" y="0" class="e">2026.03.31 16:10:01</text><text x="644" y="0" class="e">buy</text><text x="775" y="0" class="e">0.01</text><text x="907.500" y="0" class="e">4580.85</text><text x="1014" y="0" class="e">4581.85</text><use href="#x" x="1032" y="-7"/><text x="1146" y="0" class="e">4608.54</text><use href="#x" x="1164" y="-7"/><text x="1304" y="0" class="e">4586.03</text><text x="1423" y="0" class="e" style="fill:#2222e0">5.18</text><use href="#x" x="1441" y="-7"/><text x="1594" y="0" class="e">980501</text><text x="1890" y="0" class="e">Am Gold Master Pro | Utazima Me</text>
</g>

<!-- summary -->
<rect x="31" y="898" width="1865" height="30" fill="#c5c5c5"/>
<circle cx="44.500" cy="912" r="7" fill="none" stroke="#333" stroke-width="1.200"/><path d="M40.500 912h8M44.500 908v8" stroke="#333" stroke-width="1.200"/>
<text x="63" y="919" textLength="825" lengthAdjust="spacingAndGlyphs" style="font-weight:bold;fill:#1a1a1a">Balance: 474.90 USD  Equity: 487.30  Margin: 44.81  Free Margin: 442.49  Margin Level: 1 087.48 %</text>
<text x="1423" y="919" class="e" style="font-weight:bold;fill:#1a1a1a">12.40</text>

<!-- bottom tabs -->
<rect x="28" y="930" width="1891" height="36" fill="#f0f0f0"/>
<path d="M28 931H1919" stroke="#222" stroke-width="1.500"/>
<path d="M37 932V961H107V932" fill="#fff" stroke="#222" stroke-width="1.200"/>
<rect x="0" y="966" width="1919" height="1.500" fill="#bbb"/>
<path d="M211 936v23M298 936v23M399 936v23M522 936v23M620 936v23M727 936v23M803 936v23M890 936v23M1003 936v23M1090 936v23" stroke="#999"/>
<text x="50.500" y="953" style="font-size:17px">Trade</text>
<g class="b">
<text x="123.500" y="953">Exposure</text><text x="225" y="953">History</text><text x="312" y="953">News</text><text x="414" y="953">Mailbox</text><text x="536" y="953">Calendar</text><text x="635" y="953">Company</text><text x="743" y="953">Alerts</text><text x="817" y="953">Articles</text><text x="904" y="953">Code Base</text><text x="1017" y="953">Experts</text><text x="1104" y="953">Journal</text>
</g>
<text x="358" y="957" style="font-size:14px;font-weight:bold;fill:#ee1111">99</text><text x="481" y="957" style="font-size:14px;font-weight:bold;fill:#ee1111">10</text>
<path d="M1565 948h11l1 11h-13z" fill="#fbc40a" stroke="#d09a10"/><path d="M1568 948v-3c0-4 5-4 5 0v3" fill="none" stroke="#d09a10" stroke-width="1.300"/>
<text x="1587" y="956" style="fill:#222">Market</text>
<g fill="none" stroke="#cfcfcf" stroke-width="1.300"><circle cx="1669" cy="950" r="2"/><path d="M1664 945c-3 3-3 7 0 10M1674 945c3 3 3 7 0 10M1660 943c-4 4-4 10 0 14M1678 943c4 4 4 10 0 14"/></g>
<text x="1690" y="956" style="fill:#b5b5b5;font-size:16.800px">Signals</text>
<path d="M1763 956c-5 0-5-6 0-6 0-6 6-8 9-5 4 0 6 2 6 5 5 0 5 6 0 6z" fill="#cfe7f8" stroke="#1a6fb0" stroke-width="1.500"/><path d="M1771 956v4M1761 960h20" stroke="#1a6fb0" stroke-width="1.400"/>
<text x="1790" y="956" style="fill:#222">VPS</text>
<rect x="1840" y="943" width="16" height="17" rx="2" fill="#bfe3fb" stroke="#1a6fb0" stroke-width="1.500"/><path d="M1844 940v3M1848 940v3M1852 940v3M1844 960v3M1848 960v3M1852 960v3M1837 947h3M1837 951h3M1837 955h3M1856 947h3M1856 951h3M1856 955h3" stroke="#1a6fb0" stroke-width="1.200"/>
<text x="1865" y="956" style="fill:#222;font-size:17px">Tester</text>

<!-- status bar -->
<rect x="0" y="967" width="1919" height="32" fill="#f0f0f0"/>
<rect x="0" y="999" width="1919" height="3" fill="#c9c0b0"/>
<path d="M859 969v28M1055 969v28M1210 969v28M1321 969v28M1430 969v28M1534 969v28M1641 969v28M1744 969v28" stroke="#777"/>
<g class="st">
<text x="3" y="991">For Help, press F1</text><text x="865" y="991">Default</text><text x="1061" y="991">2026.03.27 11:15</text><text x="1216" y="991">O: 4431.54</text><text x="1327" y="991">H: 4436.29</text><text x="1436" y="991">L: 4429.15</text><text x="1540" y="991">C: 4433.31</text><text x="1780" y="991">22.7 / 0.1 Mb</text>
</g>
<path d="M1753 990v-4M1757 990v-7M1761 990v-10M1765 990v-13" stroke="#19a519" stroke-width="2.400"/>
<path d="M1768 990v-16" stroke="#cfcfcf" stroke-width="1.500"/>
</svg>
</body></html>
